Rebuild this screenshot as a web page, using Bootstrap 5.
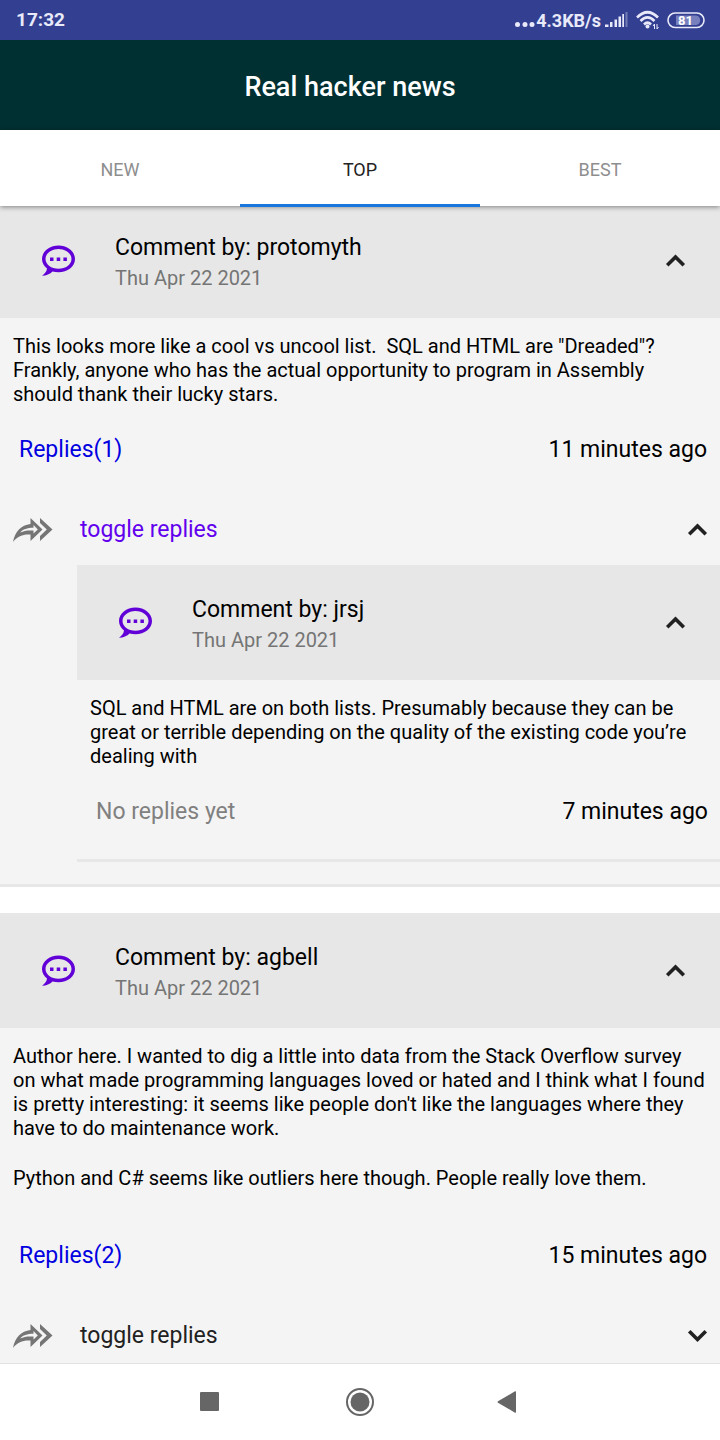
<!DOCTYPE html>
<html lang="en">
<head>
<meta charset="utf-8">
<meta name="viewport" content="width=device-width, initial-scale=1">
<title>Real hacker news</title>
<link rel="stylesheet" href="https://cdn.jsdelivr.net/npm/bootstrap@5.3.0/dist/css/bootstrap.min.css">
<style>
  body { font-family: Roboto, sans-serif; color: #000; background: #fff; }
  button { font-family: inherit; }
  svg { display: block; flex: none; }
  .plain { background: none; border: 0; padding: 0; color: inherit; text-align: left; }

  .status { height: 40px; padding: 0 15px 0 16px; background: #333f90; color: #e8eafa; font-size: 18px; font-weight: 700; }
  .status .clock { font-size: 19px; }
  .status .wifi { margin: 0 7px 0 8px; }
  .appbar { height: 90px; padding: 3px 20px 0 0; background: #003032; }
  .appbar h1 { font-size: 27px; font-weight: 500; line-height: 32px; color: #fff; }

  .tabs { height: 76px; z-index: 2; background: #fff; box-shadow: 0 1px 5px rgba(0, 0, 0, .45); }
  .tabs button { font-size: 18px; line-height: 24px; padding-top: 5px; text-align: center; color: #8e8e8e; border-bottom: 3px solid transparent; margin-bottom: -1px; }
  .tabs button.active { color: #222; border-color: #1976dc; }

  .feed { min-height: 0; overflow-y: auto; scrollbar-width: none; }
  .feed::-webkit-scrollbar { display: none; }
  .thread { background: #f4f4f4; border-bottom: 3px solid #e7e7e7; }
  .thread + .thread { margin-top: 26px; }
  .feed > .thread:first-child { margin-top: -3px; padding-bottom: 22px; }
  .nested { margin-left: 77px; }

  .head { height: 115px; padding: 0 33px 0 40px; background: #e7e7e7; }
  .head .who { margin-left: 39px; padding-top: 4px; }
  .head .name { font-size: 23px; line-height: 30px; }
  .head .date { font-size: 20px; line-height: 30px; color: #757575; }
  .copy { padding: 16px 13px 0; font-size: 20px; line-height: 24px; }
  .copy p { margin: 0; }
  .copy p + p { margin-top: 26px; padding-bottom: 22px; }
  .meta { height: 89px; padding: 0 13px 0 19px; font-size: 23px; }
  .meta a { color: #0000e0; text-decoration: none; }
  .nested .meta { height: 91px; padding-right: 12px; padding-bottom: 2px; }
  .none { color: #808080; }
  .toggle { height: 70px; padding: 0 11px 0 13px; font-size: 23px; color: #212121; }
  .toggle span { margin-left: 27px; }
  .toggle.open span { color: #6200ee; }

  .sysnav { height: 77px; padding-right: 4px; border-top: 1px solid #e2e2e2; background: #fff; }
  .sysnav .home { margin: 0 122px 0 125px; }
</style>
</head>
<body>
<svg width="0" height="0" class="position-absolute" aria-hidden="true">
  <symbol id="bubble" viewBox="0 0 36 34">
    <path fill="#6200d8" fill-rule="evenodd" d="M18.500 1.500C9.400 1.500 2 7.500 2 15c0 3.800 1.900 7.200 5 9.500C6.800 27.500 4.500 30 2 31.800c4.400 0 8-1.600 10.600-4.200 1.900.5 3.900.7 5.900.7C27.600 28.300 35 22.400 35 15S27.600 1.500 18.500 1.500Zm0 3.500C25.700 5 31.500 9.500 31.500 15s-5.800 9.800-13 9.800S5.500 20.500 5.500 15 11.300 5 18.500 5Z"/>
    <path fill="#6200d8" d="M10 13.500h3.500v3.500H10zM16.700 13.500h3.500v3.500h-3.500zM23.400 13.500h3.500v3.500h-3.500z"/>
  </symbol>
  <symbol id="up" viewBox="0 0 24 24"><path fill="none" stroke="#212121" stroke-width="3.600" stroke-linecap="square" d="m5.500 15 7-7 7 7"/></symbol>
  <symbol id="down" viewBox="0 0 24 24"><path fill="none" stroke="#212121" stroke-width="3.600" stroke-linecap="square" d="m5.500 8.500 7 7 7-7"/></symbol>
  <symbol id="share" viewBox="0 0 40 26">
    <path fill="#757575" fill-rule="evenodd" d="M17.500 1 29.500 12.500 17.500 24V17.500C10.500 17 5 18.500 0 25 2 14.500 8 8.200 17.500 7ZM20.500 8v2.800C14 11 10 12 7.200 15.600 11 13.500 15 13.200 20.500 13.500V16.500L24.800 12.500Z"/>
    <path fill="#757575" d="m27 1 12.500 11.500L27 24v-5l6.800-6.500L27 6Z"/>
  </symbol>
</svg>

<div class="vh-100 d-flex flex-column">
  <div class="status d-flex align-items-center flex-shrink-0">
    <span class="clock me-auto">17:32</span>
    <svg width="22" height="20" viewBox="0 0 22 20" fill="#e8eafa" aria-hidden="true"><circle cx="3.500" cy="14.500" r="2.500"/><circle cx="11" cy="14.500" r="2.500"/><circle cx="18" cy="14.500" r="2.500"/></svg>
    <span>4.3KB/s</span>
    <svg class="ms-1" width="23" height="16" viewBox="0 0 23 16" fill="#e8eafa" role="img" aria-label="Signal">
      <path d="M0 12.500h3.500V15H0zM5 10h2.500v5H5zM9.500 7.500H12V15H9.500zM13.500 4.500H16V15h-2.500zM17.300 2H19v13h-1.700z"/><path opacity=".35" d="M20.500 0h2v15h-2z"/>
    </svg>
    <svg class="wifi" width="24" height="20" viewBox="0 0 24 20" role="img" aria-label="Wi-Fi">
      <path fill="none" stroke="#e8eafa" stroke-width="2.600" d="M1 7.500Q11.500-3 22 7.500M4.500 11Q11.500 4 18.500 11M8 14.500q3.500-3.500 7 0"/><circle cx="11.500" cy="16.500" r="2" fill="#e8eafa"/><path fill="none" stroke="#e8eafa" d="M18.500 19v-5l-1.500 2M21 14v5l1.500-2"/>
    </svg>
    <svg width="38" height="18" viewBox="0 0 38 18" role="img" aria-label="Battery 81%">
      <rect x="1" y="2" width="36" height="14.500" rx="7.200" fill="none" stroke="#e8eafa" stroke-width="1.600"/><path fill="#7780bd" d="M9 4.500h20a4.800 4.800 0 0 1 0 9.500H9z"/><text x="18.500" y="14" text-anchor="middle" font-size="13" font-weight="700" fill="#fff">81</text>
    </svg>
  </div>
  <header class="appbar d-flex align-items-center justify-content-center flex-shrink-0"><h1 class="m-0">Real hacker news</h1></header>
  <nav class="tabs d-flex position-relative flex-shrink-0">
    <button class="plain flex-fill w-100">NEW</button>
    <button class="plain flex-fill w-100 active" aria-current="page">TOP</button>
    <button class="plain flex-fill w-100">BEST</button>
  </nav>

  <main class="feed flex-grow-1">
    <article class="thread">
      <button class="plain head w-100 d-flex align-items-center" aria-expanded="true">
        <svg width="36" height="34"><use href="#bubble"/></svg>
        <span class="who flex-grow-1"><span class="name d-block">Comment by: protomyth</span><span class="date d-block">Thu Apr 22 2021</span></span>
        <svg width="24" height="24"><use href="#up"/></svg>
      </button>
      <div class="copy"><p>This looks more like a cool vs uncool list.&nbsp; SQL and HTML are "Dreaded"? Frankly, anyone who has the actual opportunity to program in Assembly should thank their lucky stars.</p></div>
      <div class="meta d-flex align-items-center justify-content-between"><a href="#">Replies(1)</a><time>11 minutes ago</time></div>
      <button class="plain toggle open w-100 d-flex align-items-center" aria-expanded="true">
        <svg width="40" height="26"><use href="#share"/></svg><span class="flex-grow-1">toggle replies</span><svg width="24" height="24"><use href="#up"/></svg>
      </button>
      <article class="thread nested">
        <button class="plain head w-100 d-flex align-items-center" aria-expanded="true">
          <svg width="36" height="34"><use href="#bubble"/></svg>
          <span class="who flex-grow-1"><span class="name d-block">Comment by: jrsj</span><span class="date d-block">Thu Apr 22 2021</span></span>
          <svg width="24" height="24"><use href="#up"/></svg>
        </button>
        <div class="copy"><p>SQL and HTML are on both lists. Presumably because they can be great or terrible depending on the quality of the existing code you’re dealing with</p></div>
        <div class="meta d-flex align-items-center justify-content-between"><span class="none">No replies yet</span><time>7 minutes ago</time></div>
      </article>
    </article>

    <article class="thread">
      <button class="plain head w-100 d-flex align-items-center" aria-expanded="true">
        <svg width="36" height="34"><use href="#bubble"/></svg>
        <span class="who flex-grow-1"><span class="name d-block">Comment by: agbell</span><span class="date d-block">Thu Apr 22 2021</span></span>
        <svg width="24" height="24"><use href="#up"/></svg>
      </button>
      <div class="copy">
        <p>Author here. I wanted to dig a little into data from the Stack Overflow survey on what made programming languages loved or hated and I think what I found is pretty interesting: it seems like people don't like the languages where they have to do maintenance work.</p>
        <p>Python and C# seems like outliers here though. People really love them.</p>
      </div>
      <div class="meta d-flex align-items-center justify-content-between"><a href="#">Replies(2)</a><time>15 minutes ago</time></div>
      <button class="plain toggle w-100 d-flex align-items-center" aria-expanded="false">
        <svg width="40" height="26"><use href="#share"/></svg><span class="flex-grow-1">toggle replies</span><svg width="24" height="24"><use href="#down"/></svg>
      </button>
    </article>
  </main>

  <footer class="sysnav d-flex align-items-center justify-content-center flex-shrink-0">
    <button class="plain" aria-label="Recent apps"><svg width="20" height="20"><rect width="19" height="19" rx="1" fill="#666"/></svg></button>
    <button class="plain home" aria-label="Home"><svg width="30" height="30"><circle cx="15" cy="15" r="13" fill="none" stroke="#666" stroke-width="2"/><circle cx="15" cy="15" r="9.500" fill="#666"/></svg></button>
    <button class="plain" aria-label="Back"><svg width="20" height="22"><path fill="#666" d="M1 10.200 18 .3q1-.3 1 .7v20q0 1-1 .7L1 11.800q-1-.8 0-1.600Z"/></svg></button>
  </footer>
</div>
<script src="https://cdn.jsdelivr.net/npm/bootstrap@5.3.0/dist/js/bootstrap.bundle.min.js"></script>
</body>
</html>
